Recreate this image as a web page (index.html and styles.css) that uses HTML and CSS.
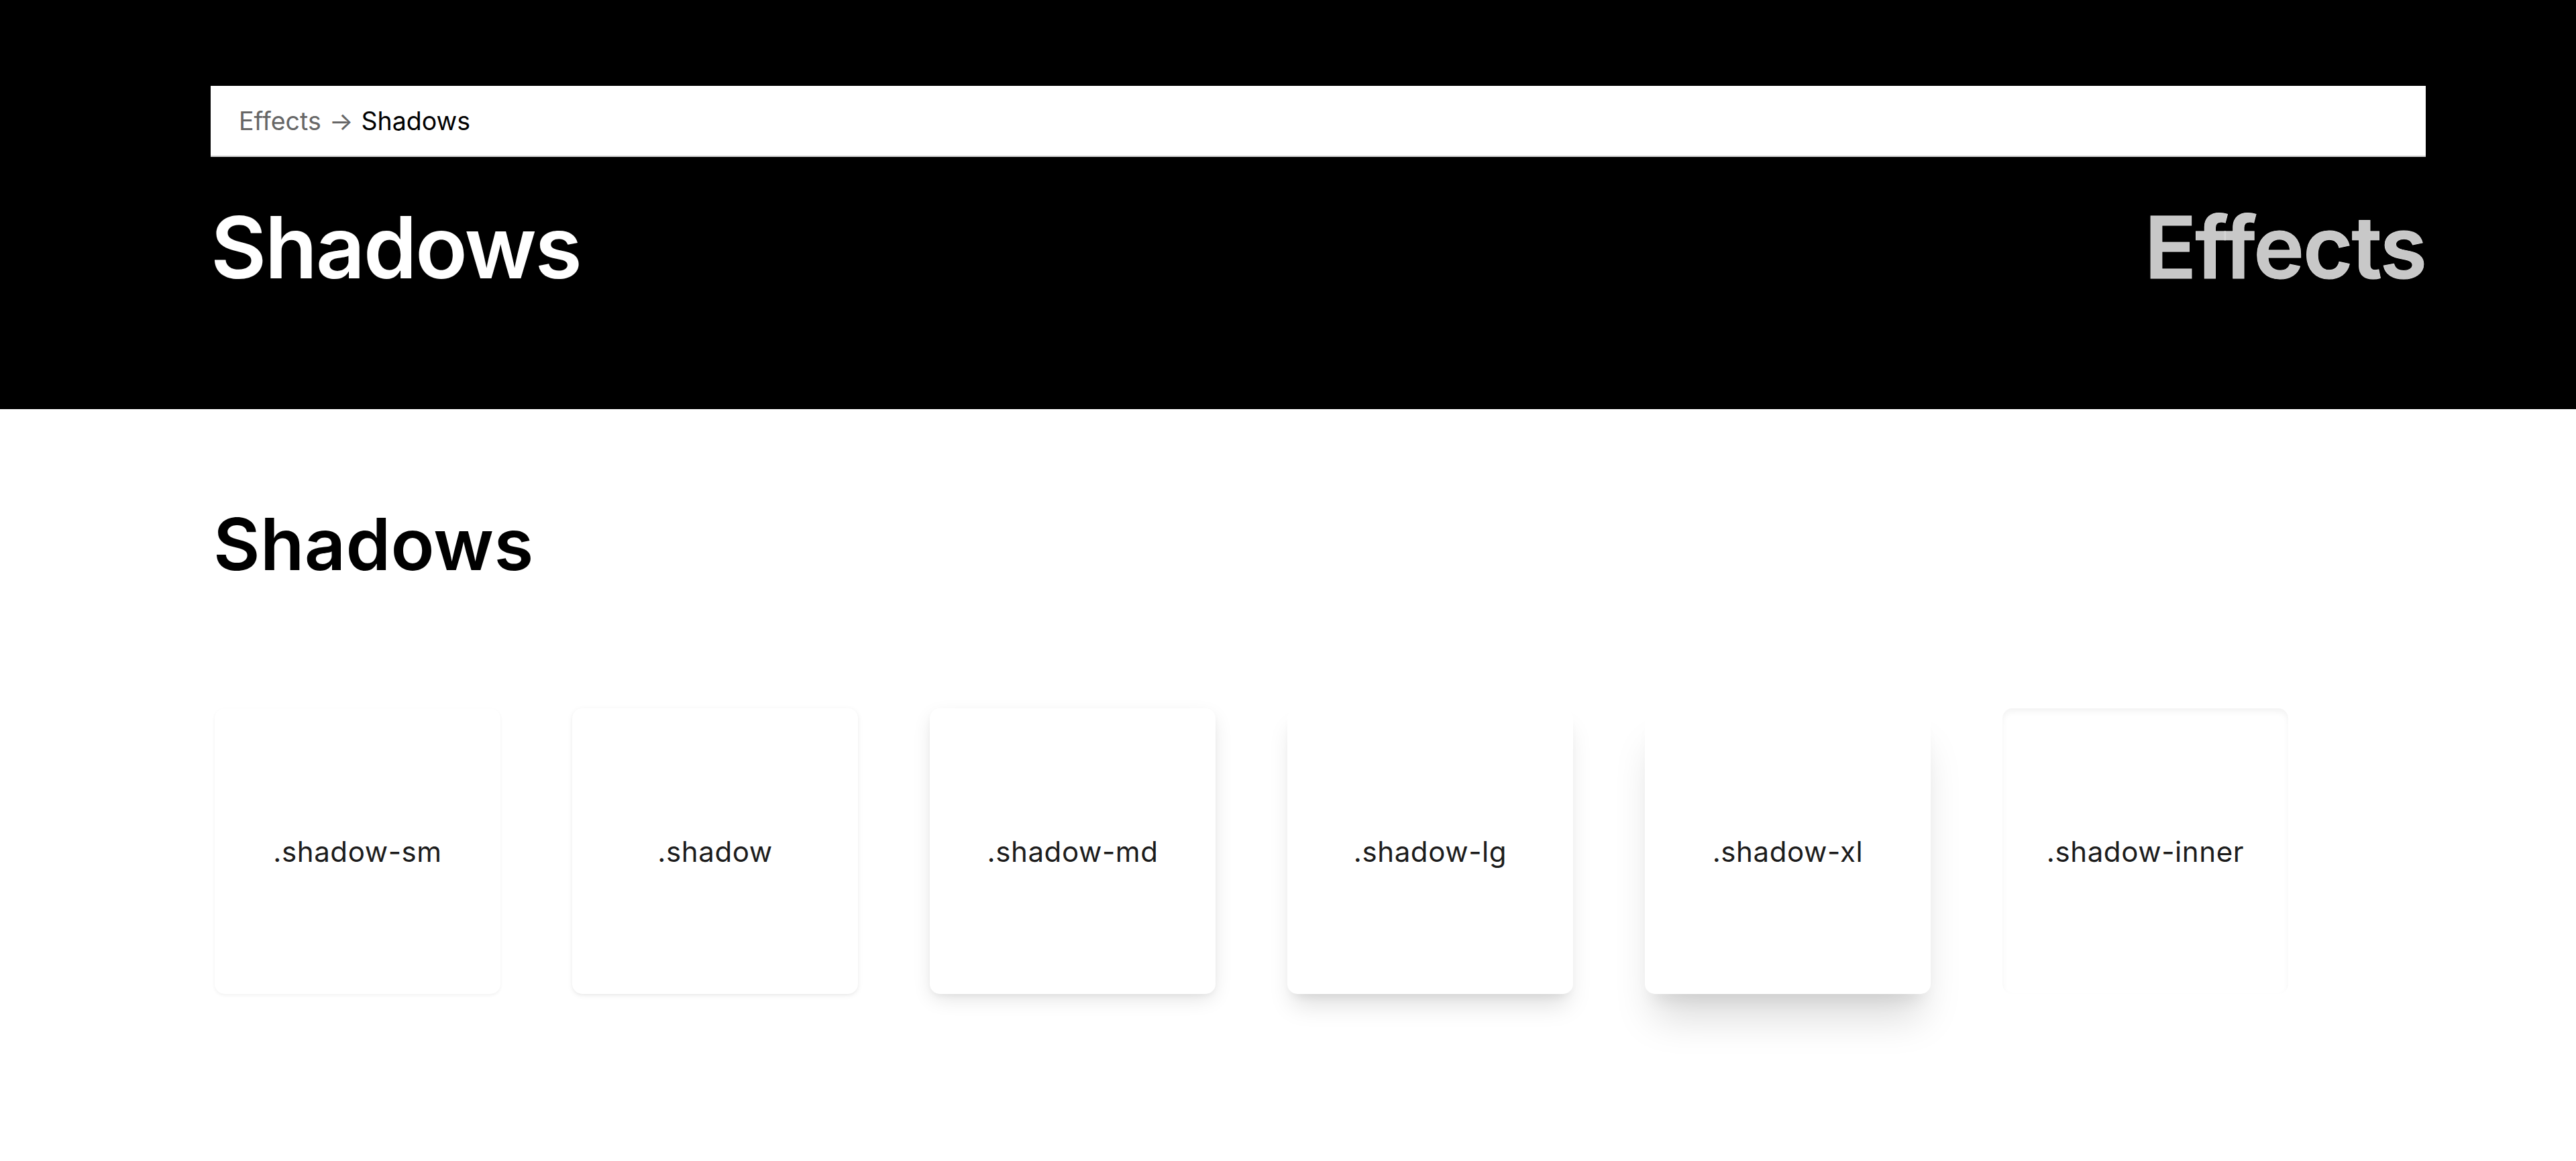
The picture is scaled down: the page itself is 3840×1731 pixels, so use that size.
FILE: index.html
```html
<!DOCTYPE html>
<html lang="en">
<head>
<meta charset="utf-8">
<title>Shadows</title>
<link rel="stylesheet" href="styles.css">
</head>
<body>
  <header class="hero">
    <div class="hero-inner">
      <nav class="crumbs">
        <span class="crumb-muted">Effects</span>
        <span class="crumb-arrow">→</span>
        <span class="crumb-current">Shadows</span>
      </nav>
      <div class="hero-titles">
        <h1 class="hero-title">Shadows</h1>
        <div class="hero-group">Effects</div>
      </div>
    </div>
  </header>
  <main class="content">
    <h2 class="section-title">Shadows</h2>
    <div class="cards">
      <div class="card card-sm">.shadow-sm</div>
      <div class="card card-base">.shadow</div>
      <div class="card card-md">.shadow-md</div>
      <div class="card card-lg">.shadow-lg</div>
      <div class="card card-xl">.shadow-xl</div>
      <div class="card card-inner">.shadow-inner</div>
    </div>
  </main>
</body>
</html>
```
FILE: styles.css
```css
* { box-sizing: border-box; }
html, body { margin: 0; padding: 0; }
body {
  background: #fff;
  font-family: Inter, "Noto Sans", "Liberation Sans", sans-serif;
  color: #000;
  min-height: 100vh;
}
.hero {
  background: #000;
  height: 610px;
}
.hero-inner {
  padding: 128px 224px 0 314px;
}
.crumbs {
  background: #fff;
  height: 106px;
  display: flex;
  align-items: center;
  gap: 12px;
  padding-left: 42px;
  font-size: 37.5px;
  border-bottom: 2px solid #cfcfcf;
}
.crumb-muted, .crumb-arrow { color: #666; }
.crumb-current { color: #000; }
.hero-titles {
  display: flex;
  justify-content: space-between;
  align-items: baseline;
  margin-top: 71px;
}
.hero-title {
  margin: 0;
  font-size: 128px;
  line-height: 1;
  font-weight: 600;
  color: #fff;
  letter-spacing: -2.5px;
}
.hero-group {
  font-size: 128px;
  line-height: 1;
  font-weight: 600;
  color: #c8c8c8;
  letter-spacing: -2px;
  -webkit-text-stroke: 1px #d8d8d8;
}
.content {
  padding: 148px 222px 248px 318px;
}
.section-title {
  margin: 0;
  font-size: 107px;
  line-height: 1;
  font-weight: 600;
  letter-spacing: 0.3px;
}
.cards {
  display: flex;
  gap: 107px;
  margin-top: 191px;
  padding-left: 2px;
}
.card {
  width: 426px;
  height: 426px;
  border-radius: 15px;
  background: #fff;
  display: flex;
  align-items: center;
  justify-content: center;
  font-size: 42px;
  letter-spacing: 0.6px;
  color: #1c1c1c;
}
.card-sm { box-shadow: 0 2px 5px 0 rgba(0,0,0,0.06); }
.card-base { box-shadow: 0 2px 8px 0 rgba(0,0,0,0.07), 0 2px 5px -2px rgba(0,0,0,0.07); }
.card-md { box-shadow: 0 10px 30px -4px rgba(0,0,0,0.12), 0 4px 10px -2px rgba(0,0,0,0.06); }
.card-lg { box-shadow: 0 24px 36px -8px rgba(0,0,0,0.13), 0 10px 15px -8px rgba(0,0,0,0.09); }
.card-xl { box-shadow: 0 48px 60px -14px rgba(0,0,0,0.15), 0 20px 24px -12px rgba(0,0,0,0.07); }
.card-inner { box-shadow: inset 0 5px 10px 0 rgba(0,0,0,0.05); }
```
